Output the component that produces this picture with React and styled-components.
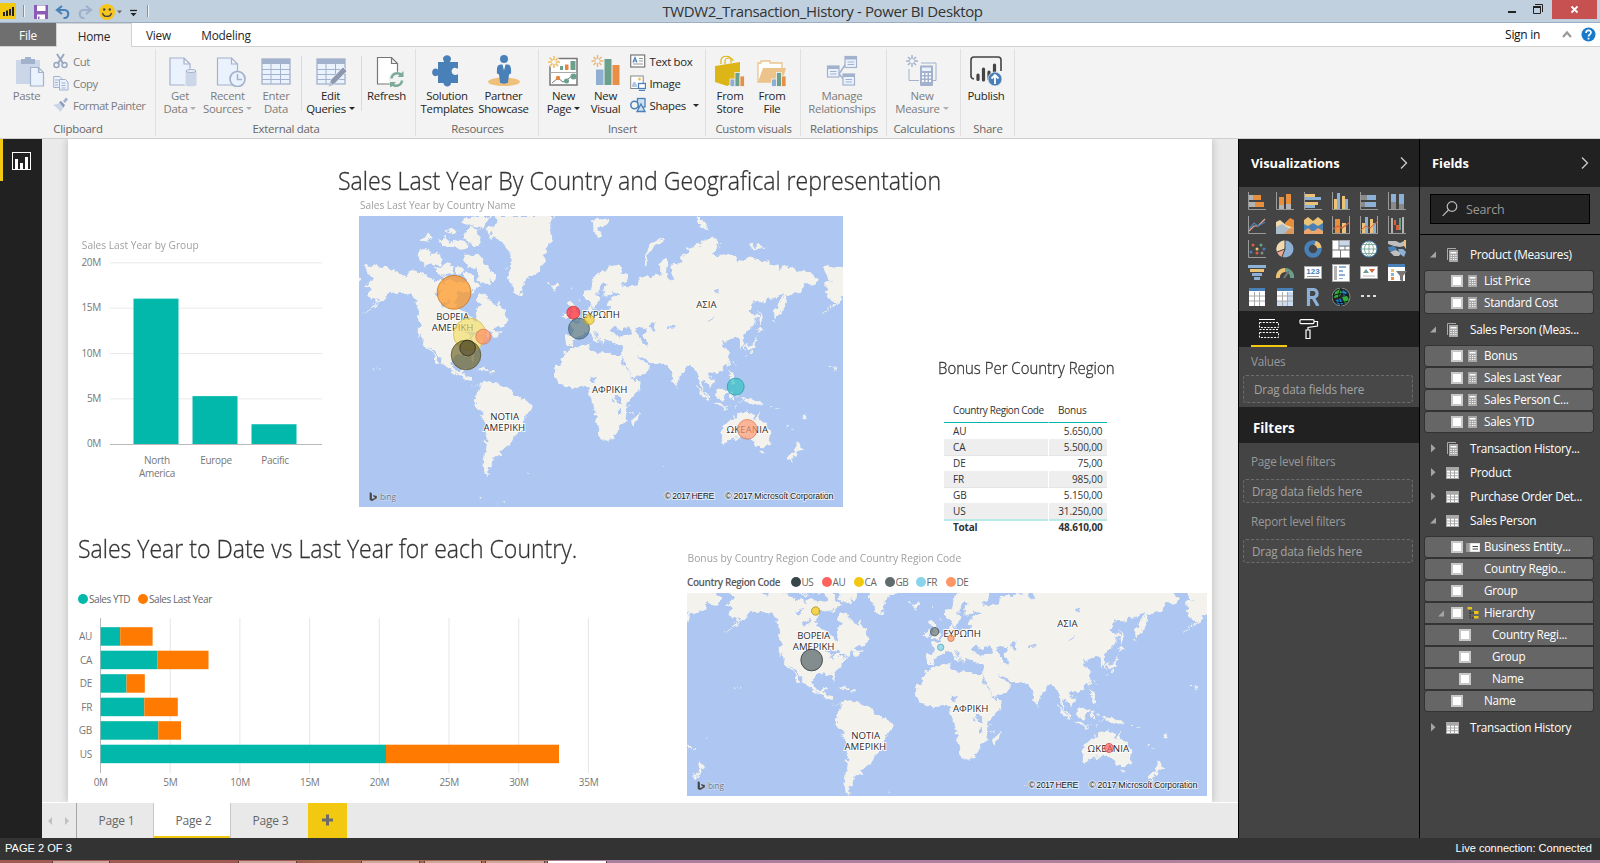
import React from "react";
import styled, { createGlobalStyle, css } from "styled-components";

const Global = createGlobalStyle`
  * { box-sizing: border-box; }
  body { margin: 0; overflow: hidden; font-family: "Open Sans", "Noto Sans", sans-serif; font-size: 12px; color: #333; }
`;

/* ---------- shell ---------- */
const Window = styled.div`width: 1600px; height: 863px; display: flex; flex-direction: column; background: #eaeaea;`;
const TitleBar = styled.header`height: 23px; flex: none; display: flex; align-items: stretch; background: #c0d0df; border-bottom: 1px solid #9cafc2;`;
const QuickAccess = styled.div`width: 160px; flex: none; svg { display: block; }`;
const WindowTitle = styled.div`flex: 1; text-align: center; padding-right: 18px; font-size: 15px; line-height: 23px; letter-spacing: -0.38px; color: #333;`;
const WindowButtons = styled.div`width: 97px; flex: none; display: flex; svg { display: block; }`;
const TabRow = styled.nav`height: 24px; flex: none; display: flex; background: #fff; border-bottom: 1px solid #d2d2d2;`;
const Tab = styled.div`
  width: ${(p) => p.$w}px; height: 24px; line-height: 25px; text-align: center; font-size: 11.8px; letter-spacing: -0.2px; color: #262626;
  ${(p) => p.$kind === "file" && css`background: #6f6f6f; color: #fff; height: 23px; line-height: 24px;`}
  ${(p) => p.$kind === "active" && css`background: #f3f3f3; border: 1px solid #d2d2d2; border-bottom: 0;`}
`;
const TabTail = styled.div`margin-left: auto; display: flex; align-items: center; gap: 20px; padding-right: 4px; font-size: 12px; letter-spacing: -0.3px; color: #111; svg { display: block; }`;

/* ---------- ribbon ---------- */
const Ribbon = styled.div`height: 92px; flex: none; display: flex; background: #f3f3f3; border-bottom: 1px solid #cfcfcf;`;
const Group = styled.section`
  width: ${(p) => p.$w}px; flex: none; display: flex; flex-direction: column; justify-content: space-between; height: 91px;
  background: linear-gradient(#e0e0e0, #e0e0e0) right 2px / 1px 87px no-repeat; background-position: right 0 top 2px;
`;
const GroupBody = styled.div`display: flex; padding: 8px 0 0 ${(p) => p.$pad || 0}px;`;
const GroupName = styled.div`text-align: center; font-size: 11.4px; letter-spacing: -0.25px; line-height: 14px; padding-bottom: 2px; color: #666;`;
const BigButton = styled.div`
  width: ${(p) => p.$w}px; flex: none; display: flex; flex-direction: column; align-items: center;
  font-size: 11.4px; line-height: 13px; letter-spacing: -0.28px; color: ${(p) => (p.$off ? "#7c7c7c" : "#262626")};
  white-space: nowrap; text-align: center;
  svg { display: block; width: 34px; height: 32px; margin-bottom: 2px; transform: translateX(${(p) => p.$dx || 0}px); }
`;
const Caret = styled.i`display: inline-block; margin-left: 3px; vertical-align: 3px; border: 3px solid transparent; border-top: 3.5px solid ${(p) => (p.$off ? "#b0b0b0" : "#262626")}; border-bottom: 0;`;
const ShortRule = styled.div`width: 1px; height: 55px; margin: 1px 0 0 ${(p) => p.$gap || 0}px; flex: none; background: #dadada;`;
const SmallStack = styled.div`display: flex; flex-direction: column; gap: 6px; padding-left: ${(p) => p.$pad || 0}px; margin-top: -2px;`;
const SmallButton = styled.div`
  display: flex; align-items: center; gap: 4px; height: 16px; font-size: 11.4px; letter-spacing: ${(p) => (p.$off ? -0.5 : -0.33)}px; white-space: nowrap; color: ${(p) => (p.$off ? "#7c7c7c" : "#262626")};
  svg { display: block; width: 16px; height: 16px; }
`;

/* ---------- workspace ---------- */
const Workspace = styled.div`height: 699px; flex: none; display: flex;`;
const Rail = styled.aside`width: 42px; flex: none; background: #212121;`;
const RailItem = styled.div`height: 42px; border-left: 3px solid #f2c811; padding: 13px 0 0 9px; svg { display: block; }`;
const Center = styled.main`width: 1196px; flex: none; display: flex; flex-direction: column;`;
const Stage = styled.div`height: 664px; padding: 0 26px; background: #eaeaea; border-bottom: 1px solid #fff; overflow: hidden;`;
const Report = styled.div`width: 1144px; height: 663px; background: #fff; box-shadow: 0 0 8px rgba(0,0,0,.22); padding-top: 26px;`;
const Row = styled.div`display: flex; align-items: flex-start; height: ${(p) => p.$h}px;`;
const Visual = styled.div`width: ${(p) => p.$w}px; flex: none; padding: ${(p) => p.$top}px 0 0 ${(p) => p.$left || 0}px; svg { display: block; }`;
const Heading = styled.h1`
  margin: 0 0 0 ${(p) => p.$left || 0}px; font-weight: 300; color: #333; white-space: nowrap; -webkit-text-stroke: .3px #333;
  font-size: ${(p) => p.$size}px; line-height: ${(p) => (p.$size > 20 ? 30 : 20)}px; transform: scaleX(${(p) => p.$narrow}); transform-origin: 0 50%;
`;
const VisualTitle = styled.div`font-size: 11px; line-height: 14px; color: #a0a0a0; white-space: nowrap; padding-left: ${(p) => p.$left || 0}px; transform: scaleX(${(p) => p.$narrow}); transform-origin: 0 50%;`;
const MapSlot = styled.div`padding-top: 4px;`;
const Legend = styled.div`display: flex; align-items: center; height: 14px; margin: ${(p) => p.$top}px 0 0 ${(p) => p.$left || 0}px; font-size: 10px; letter-spacing: -0.42px; color: #666; white-space: nowrap;`;
const LegendName = styled.span`font-weight: 600; width: 103.5px; letter-spacing: -0.43px; color: #5a5a5a;`;
const LegendItem = styled.span`
  display: flex; align-items: center; gap: 1px; width: ${(p) => p.$w}px;
  &::before { content: ""; width: 10px; height: 10px; border-radius: 50%; background: ${(p) => p.$c}; }
`;
const Table = styled.div`width: 163px; margin: 22px 0 0 5.5px; font-size: 10px; color: #333; white-space: nowrap;`;
const TableRow = styled.div`
  display: grid; grid-template-columns: 104px 1fr; line-height: 16px; height: 16px;
  span { padding: 0 4px 0 9.5px; background: ${(p) => (p.$stripe ? "#eee" : "transparent")}; border-bottom: 1px solid ${(p) => (p.$stripe ? "#e4e4e4" : "transparent")}; letter-spacing: -0.1px; }
  span + span { text-align: right; border-left: 1px solid #fff; }
  ${(p) => p.$head && css`height: 23px; line-height: 20px; span { letter-spacing: -0.4px; padding-right: 0; border-bottom: 1px solid #01b8aa; } span + span { text-align: left; letter-spacing: -0.2px; }`}
  ${(p) => p.$last && css`span { border-bottom: 2px solid #b8ebe6; }`}
  ${(p) => p.$total && css`font-weight: 700; span { letter-spacing: -0.2px; }`}
`;
const PageBar = styled.div`height: 35px; display: flex; background: #e9e9e9; color: #666;`;
const Pager = styled.div`width: 35px; border-right: 1px solid #a5a5a5; svg { display: block; }`;
const PageTab = styled.div`
  width: 77px; text-align: center; padding-left: 3px; line-height: 36px; font-size: 12px; letter-spacing: -0.2px; border-right: 1px solid ${(p) => (p.$last ? "transparent" : "#c8c8c8")};
  ${(p) => p.$on && css`background: #fff; box-shadow: inset 0 -2px #f2c811;`}
`;
const AddPage = styled.div`width: 39px; background: #f2c811; svg { display: block; }`;

/* ---------- side panes ---------- */
const Pane = styled.aside`width: 181px; flex: none; background: #444; border-left: 1px solid #000; display: flex; flex-direction: column;`;
const PaneHead = styled.div`height: 48px; flex: none; display: flex; justify-content: space-between; align-items: center; background: #212121; color: #fff; font-weight: 700; font-size: 12.9px; letter-spacing: -0.05px; padding: 0 11px 0 12px; svg { display: block; }`;
const SubHead = styled(PaneHead)`height: 36px; padding: 5px 0 0 14px; font-size: 13.4px;`;
const Gallery = styled.div`height: 124px; padding: 2px 0 0 4px; display: grid; grid-template-columns: repeat(6, 28px); grid-auto-rows: 24px; place-items: center; svg { display: block; }`;
const ModeTabs = styled.div`height: 36px; background: #212121; display: flex; gap: 4px; padding-left: 12px; svg { display: block; }`;
const ModeTab = styled.div`width: 36px; display: flex; justify-content: center; padding-top: 8px; border-bottom: ${(p) => (p.$on ? "2px solid #f2c811" : 0)};`;
const WellLabel = styled.div`font-size: 11.7px; letter-spacing: -0.22px; color: #999; line-height: 16px; height: ${(p) => p.$top + 16}px; padding: ${(p) => p.$top - 1}px 0 0 12px;`;
const Well = styled.div`margin: ${(p) => p.$m}; height: ${(p) => p.$h}px; line-height: ${(p) => p.$h - 1}px; border: 1px dashed #6c6c6c; border-radius: 3px; background: #484848; color: #a3a3a3; font-size: 11.7px; letter-spacing: -0.17px; padding-left: ${(p) => p.$pad}px;`;
const SearchArea = styled.div`height: 48px; padding: 7px 10px; border-bottom: 1px solid #000;`;
const SearchBox = styled.div`height: 30px; border: 1px solid #000; background: #222; display: flex; align-items: center; gap: 8px; padding-left: 11px; color: #999; font-size: 12.5px; letter-spacing: -0.2px; svg { display: block; }`;
const FieldTree = styled.div`padding-top: 8px;`;
const TableHead = styled.div`height: 24px; display: flex; align-items: center; color: #fff; font-size: 11.8px; letter-spacing: -0.3px; white-space: nowrap; padding: 0 0 1px 9px; svg { display: block; }`;
const GlyphPad = styled.span`width: 33px; display: flex; padding-left: 9px; flex: none;`;
const FieldList = styled.div`margin: 3px 6px 4px 4px;`;
const Field = styled.div`
  height: 22px; display: flex; align-items: center; background: #666; border: 1px solid #333; border-radius: ${(p) => (p.$joined ? 0 : 3)}px; background-clip: padding-box;
  color: #fff; font-size: 11.7px; letter-spacing: -0.25px; white-space: nowrap; padding: 0 0 0 ${(p) => (p.$deep ? 34 : 10)}px;
  svg { display: block; }
`;
const FieldName = styled.span`line-height: 16px; padding-bottom: 2px;`;
const Box = styled.span`width: 12px; height: 12px; background: #fff; border: 2px solid #c8c8c8; flex: none;`;
const ArrowSlot = styled.span`width: 16px; flex: none; padding-left: 2px;`;
const GlyphSlot = styled.span`width: 21px; display: flex; justify-content: center; padding-right: 2px; flex: none;`;
const StatusBar = styled.footer`height: 22px; flex: none; background: #333; color: #fff; display: flex; justify-content: space-between; padding: 0 8px 0 5px; line-height: 20px; font-family: "Liberation Sans", sans-serif; font-size: 11.1px; letter-spacing: -0.02px;`;
const TaskStrip = styled.div`height: 3px; flex: none; display: flex; background: linear-gradient(90deg, #9f5a52 0, #9f5a52 290px, #a56a50 320px, #a56a50 535px, #a97f9e 560px, #b2829f 100%);`;
const TaskButton = styled.i`width: ${(p) => p.$w}px; margin-left: ${(p) => p.$m}px; margin-top: 1px; background: ${(p) => (p.$on ? "#fff" : "#cfa69d")}; border-left: 1px solid #5c3c38; border-right: 1px solid #5c3c38;`;

/* ---------- world map ---------- */
const LAND = [
  // North America
  "48,352 62,347 90,350 122,352 140,365 165,377 185,366 205,362 215,372 240,383 262,393 280,398 300,392 322,400 345,392 345,372 352,362 366,378 372,392 392,402 384,412 368,425 352,420 338,425 322,430 314,443 316,468 328,478 345,490 360,500 370,518 382,518 384,500 378,480 390,465 384,448 386,432 410,440 422,458 440,474 450,455 460,482 475,515 468,526 440,528 428,545 448,548 462,540 455,552 432,560 420,548 404,562 398,572 392,590 384,604 368,614 372,638 364,630 358,616 340,613 322,617 308,628 304,645 312,664 326,667 336,652 346,652 336,672 360,678 360,694 372,704 392,704 404,700 398,710 375,704 350,690 328,680 300,664 285,652 275,632 255,605 244,590 240,588 250,608 264,630 270,645 258,634 244,610 236,598 214,570 206,545 208,505 206,475 192,450 178,440 165,430 130,428 112,438 95,452 74,470 52,486 34,496 62,476 88,452 64,448 50,430 64,416 48,402 70,390 56,374",
  // Arctic archipelago
  "205,306 225,300 245,312 262,308 276,325 268,345 245,340 230,350 212,335",
  "258,355 290,340 310,350 306,372 280,380 262,372",
  "335,316 352,320 368,312 392,320 402,345 418,362 438,378 432,392 418,388 426,410 404,402 388,388 392,370 372,352 350,350 342,335",
  "262,270 285,262 300,272 318,266 345,278 356,290 330,296 300,290 276,292",
  "285,240 305,232 325,240 320,256 295,256",
  "340,245 360,230 385,240 380,262 398,280 372,292 352,280",
  "330,215 350,205 380,198 426,198 412,216 396,236 376,232 352,224",
  "215,268 238,248 248,262 228,282",
  "318,352 336,352 340,372 322,374",
  "345,410 362,412 368,422 350,424",
  // Greenland
  "408,236 430,232 438,212 432,198 608,198 600,230 604,270 596,292 580,310 590,325 575,345 560,360 546,378 526,386 518,410 510,438 496,430 487,402 478,370 482,332 472,300 458,278 440,266 415,266 426,250",
  // Iceland
  "595,400 606,406 620,397 626,408 610,419 597,413",
  // South America
  "400,700 415,692 430,700 445,697 460,708 480,716 490,735 510,748 535,755 546,768 540,785 525,805 520,832 510,850 492,860 480,882 466,896 446,905 452,914 430,926 428,946 415,960 416,984 404,970 400,940 405,900 410,860 411,822 400,802 380,775 371,752 380,732 386,712",
  // Africa
  "648,597 690,588 715,585 718,600 745,612 765,605 790,612 812,612 818,640 835,665 848,692 872,694 870,712 850,736 830,760 828,790 832,812 806,830 800,850 785,870 755,875 745,850 738,825 735,800 740,785 725,770 725,745 715,735 718,715 700,706 670,715 650,715 630,700 615,680 620,650 635,625",
  "870,784 862,812 852,834 845,820 850,800",
  // Europe and Asia
  "648,585 645,556 652,552 674,553 672,540 660,526 678,520 690,510 702,500 714,492 716,472 724,464 728,482 752,482 772,474 776,456 792,450 784,441 806,436 800,428 778,434 764,440 760,424 774,402 766,394 752,410 742,430 745,448 738,464 730,474 722,462 712,450 702,450 702,430 718,412 728,398 736,375 752,362 778,350 802,345 815,365 834,380 830,395 808,396 822,408 836,412 862,402 868,385 888,378 905,384 915,372 932,378 930,350 940,325 950,322 955,345 948,370 960,395 970,380 960,350 968,332 985,335 1000,340 990,320 1010,305 1030,290 1060,275 1085,258 1110,280 1105,295 1085,310 1100,318 1140,315 1160,325 1165,340 1180,330 1200,325 1250,335 1285,350 1290,360 1315,350 1350,360 1380,368 1400,388 1395,404 1365,402 1352,428 1330,432 1310,438 1302,465 1290,492 1278,505 1275,482 1290,455 1306,430 1280,438 1250,455 1215,452 1194,482 1222,492 1215,520 1192,545 1178,562 1186,588 1175,597 1165,572 1150,560 1132,572 1118,568 1128,590 1140,612 1135,642 1118,660 1095,668 1075,672 1092,696 1080,708 1065,690 1054,692 1066,720 1085,746 1078,748 1056,712 1045,680 1035,658 1024,645 1005,665 986,690 978,706 968,690 960,665 955,648 935,636 905,640 880,625 860,618 876,640 896,638 906,650 890,670 860,684 846,686 830,650 810,612 818,590 815,580 792,586 780,574 766,568 760,582 748,570 738,552 722,536 738,560 750,570 735,574 718,552 702,546 690,562 675,570 665,585",
  // British Isles
  "662,458 674,462 680,486 692,502 678,508 662,508 668,490 656,480",
  "646,484 656,484 656,500 644,500",
  // Arctic Russia and Svalbard
  "882,345 886,312 906,280 936,263 942,268 910,292 895,316 892,346",
  "722,212 745,206 778,202 765,224 748,236 756,256 742,262 728,236",
  "1036,198 1060,206 1078,235 1062,238 1040,214",
  "1200,284 1226,288 1250,293 1222,296 1202,292",
  // East Asia islands
  "1226,484 1238,500 1232,530 1226,520",
  "1222,538 1244,542 1222,556", "1222,556 1216,588 1186,602 1184,594 1210,578",
  "1142,632 1138,650 1132,640", "1138,655 1146,675 1162,704 1150,708 1140,682",
  "1040,706 1060,726 1084,755 1070,753 1050,730", "1084,760 1114,762 1144,770 1112,770",
  "1094,736 1122,712 1130,722 1120,748 1104,746", "1136,728 1152,728 1142,736 1148,754 1138,750",
  "1172,742 1205,744 1242,764 1216,768 1192,760",
  "976,696 984,706 978,714",
  // Oceania
  "1114,826 1150,806 1165,790 1192,780 1206,794 1216,810 1224,780 1232,800 1250,826 1264,850 1258,876 1246,892 1216,890 1210,872 1195,866 1170,862 1142,872 1120,877 1114,850",
  "1231,908 1244,908 1237,921",
  "1344,880 1356,896 1340,906 1324,936 1316,931 1334,906",
  // Caribbean
  "380,652 398,655 418,664 396,662", "420,664 438,664 432,670 418,670",
];
const WATER = [
  "782,546 796,530 812,536 830,530 850,548 826,556 794,556",
  "864,530 888,538 880,556 896,578 888,592 872,580 866,556 856,544",
  "904,526 914,522 912,542 902,540", "1072,510 1086,504 1096,484 1088,508 1074,516",
  "798,738 814,738 812,756 800,756", "806,772 812,772 814,796 808,794", "786,762 790,748 794,762",
  "350,540 372,540 386,552 372,552 366,572 358,568 360,552 342,548", "388,560 402,552 404,560 388,568",
  "250,428 268,420 278,426 256,436", "275,460 300,452 296,462 272,470", "1092,420 1108,416 1110,426 1094,428", "946,532 968,524 980,528 950,538",
  "724,680 740,680 738,692 726,690",
];
const DOTS = [[470,357],[480,385],[660,412],[686,452],[1160,734],[1172,752],[1258,770],[1285,774],[1360,802],[1152,640],[85,655],[70,650],[1456,655],[940,950],[838,768],[846,784],[1130,776],[1160,774],[392,1040],[440,1066],[458,1050],[1192,618],[1206,606],[1270,512],[1310,830],[1322,836],[536,968]];
const LABELS = [["ΒΟΡΕΙΑ",308,500,98],["ΑΜΕΡΙΚΗ",308,533,125],["ΕΥΡΩΠΗ",753,495,113],["ΑΣΙΑ",1069,464,61],["ΑΦΡΙΚΗ",779,720,106],["ΝΟΤΙΑ",464,801,87],["ΑΜΕΡΙΚΗ",463,832,125],["ΩΚΕΑΝΙΑ",1192,838,125]];
const WORLD = 1373;

const MapText = styled.text`
  font-family: "Open Sans", sans-serif; font-size: 29px; fill: #2d2d2d; text-anchor: middle; paint-order: stroke; stroke: #fff; stroke-opacity: .85; stroke-width: 6px;
`;
const MapCredit = styled.text`font-family: "Liberation Sans", sans-serif; font-size: 9px; fill: #222; paint-order: stroke; stroke: #fff; stroke-opacity: .6; stroke-width: 2px;`;

function Land({ shift }) {
  return (
    <g transform={`translate(${shift} 0)`}>
      {LAND.map((p) => <polygon key={p} points={p} fill="#f3f2ed" />)}
      {WATER.map((p) => <polygon key={p} points={p} fill="#adc7f2" />)}
      {DOTS.map(([x, y]) => <rect key={x + "-" + y} x={x - 3} y={y - 2} width="6" height="5" fill="#eef1f0" />)}
    </g>
  );
}

function WorldMap({ id, width, height, dx, dy, bubbles }) {
  return (
    <svg width={width} height={height} viewBox={`0 0 ${width} ${height}`}>
      <defs>
        <filter id={id} filterUnits="userSpaceOnUse" x="-140" y="150" width="1720" height="960">
          <feTurbulence type="fractalNoise" baseFrequency="0.045" numOctaves="3" seed="4" result="n" />
          <feDisplacementMap in="SourceGraphic" in2="n" scale="28" xChannelSelector="R" yChannelSelector="G" />
        </filter>
      </defs>
      <rect width={width} height={height} fill="#adc7f2" />
      <g transform={`translate(${dx} ${dy}) scale(.33333) translate(-27 -198)`}>
        <g filter={`url(#${id})`}>
          <Land shift={-WORLD} /><Land shift={0} /><Land shift={WORLD} />
        </g>
        {LABELS.map(([t, x, y, w]) => <MapText key={t + y} x={x} y={y + 10} textLength={w}>{t}</MapText>)}
        {bubbles.map(([x, y, r, c, s, o]) => (
          <circle key={x} cx={x} cy={y} r={r - 1.5} fill={c} fillOpacity={o || 0.75} stroke={s} strokeWidth="3" strokeOpacity=".8" />
        ))}
      </g>
      <g transform={`translate(10 ${height - 15})`}>
        <path d="M.5 0 3 1v6l3-1.5-1.600-.8-.8-2L8 4v2.200L3 9.300.5 8z" fill="#444" stroke="#fff" strokeOpacity=".4" strokeWidth=".5" />
        <text x="11" y="8" fontSize="8.500" fill="#6d7480" stroke="#fff" strokeOpacity=".5" strokeWidth="1" paintOrder="stroke" fontFamily="Open Sans, sans-serif" textLength="16">bing</text>
      </g>
      <MapCredit x={width - 178.500} y={height - 8} textLength="50">© 2017 HERE</MapCredit>
      <MapCredit x={width - 118} y={height - 8} textLength="108.500">© 2017 Microsoft Corporation</MapCredit>
    </svg>
  );
}

const SALES_BUBBLES = [
  [359, 553, 50, "#f5dd62", "#d3bd50", 0.65], [312, 427, 52, "#ff9a27", "#c8741f", 0.75], [400, 560, 24, "#fd8f62", "#d97f5a", 0.7],
  [348, 615, 46, "#6b5f1c", "#5c5430", 0.65], [353, 594, 25, "#3f3b26", "#2f2c1c", 0.5], [670, 488, 21, "#ff2f35", "#c93338", 0.75],
  [687, 536, 33, "#4c6b78", "#3f5f6e", 0.65], [718, 509, 16, "#f2c811", "#bfa022", 0.65], [1157, 710, 27, "#2bc0c0", "#25a0a3", 0.65], [1192, 838, 31, "#fd9a72", "#d9805d", 0.7],
];
const BONUS_BUBBLES = [
  [314, 426, 14, "#f2c811", "#a8912a", 0.75], [302, 573, 34, "#5f6b6d", "#2f3a3c", 0.75], [671, 488, 14, "#5f6b6d", "#3c4b55", 0.65],
  [720, 508, 11, "#fe9666", "#cc7850", 0.75], [689, 535, 11, "#8ad4eb", "#4fa9be", 0.8], [1194, 837, 15, "#fd625e", "#d04a48", 0.7],
];

/* ---------- charts ---------- */
const AxisText = styled.text`font-family: "Open Sans", sans-serif; font-size: 10px; letter-spacing: -0.3px; fill: #777; text-anchor: ${(p) => p.$a || "end"};`;

function GroupChart() {
  const y0 = 191.700, unit = 9.070;
  const groups = [["North", 133.500, 16.05, "America"], ["Europe", 192.500, 5.3], ["Pacific", 251.500, 2.2]];
  return (
    <svg width="291" height="240" viewBox="68 0 291 240">
      {[5, 10, 15, 20].map((v) => <rect key={v} x="110" y={y0 - v * unit} width="212" height="1" fill="#e8e8e8" />)}
      {[0, 5, 10, 15, 20].map((v) => <AxisText key={v} x="101" y={y0 - v * unit + 3.500}>{v}M</AxisText>)}
      {groups.map(([n, x, v, n2]) => (
        <g key={n}>
          <rect x={x} y={y0 - v * unit + 0.5} width="45" height={v * unit} fill="#01b8aa" />
          <AxisText $a="middle" x={x + 23.500} y="212">{n}</AxisText>
          {n2 && <AxisText $a="middle" x={x + 23.500} y="225">{n2}</AxisText>}
        </g>
      ))}
      <rect x="110" y={y0 + 0.3} width="212" height="1" fill="#b8b8b8" />
    </svg>
  );
}

function YearChart() {
  const x0 = 100.700, unit = 13.940;
  const rows = [["AU", 120.2, 152.600], ["CA", 157.600, 208.500], ["DE", 126.500, 144.800], ["FR", 144.300, 177.800], ["GB", 158.300, 181], ["US", 386, 559]];
  return (
    <svg width="560" height="190" viewBox="68 606 560 190">
      {[0, 5, 10, 15, 20, 25, 30, 35].map((v) => (
        <g key={v}>
          <rect x={x0 + v * unit - 0.7} y="618" width="1" height="155" fill={v ? "#e6e6e6" : "#b8b8b8"} />
          <AxisText $a="middle" x={x0 + v * unit} y="786.200">{v}M</AxisText>
        </g>
      ))}
      {rows.map(([n, a, b], i) => (
        <g key={n}>
          <AxisText x="92" y={640 + i * 23.500}>{n}</AxisText>
          <rect x={x0} y={627.200 + i * 23.500} width={a - x0} height="18.500" fill="#01b8aa" />
          <rect x={a} y={627.200 + i * 23.500} width={b - a} height="18.500" fill="#ff7a00" />
        </g>
      ))}
    </svg>
  );
}

/* ---------- ribbon icons ---------- */
const PALE = "#eaf2fd", LINE = "#a3b2cc", MID = "#cbd6e8", BLUE = "#4a80b8";
const Svg = ({ children, vb = "0 0 34 32" }) => <svg viewBox={vb} fill="none">{children}</svg>;
const Sheet = () => <path d="M3.500 3h14l6 6v21h-20z M17.500 3v6h6" fill={PALE} stroke={LINE} strokeWidth="1.200" />;
const Spark = ({ c, x = 0, y = 0 }) => (
  <path transform={`translate(${x} ${y})`} d="M6 0v4M6 8v4M0 6h4M8 6h4M2 2l2.600 2.600M7.500 7.500 10 10M10 2 7.500 4.500M4.500 7.500 2 10" stroke={c} strokeWidth="1.500" />
);
const Grid = () => (
  <>
    <rect x="3" y="4" width="28" height="25" fill={PALE} stroke={LINE} strokeWidth="1.300" />
    <rect x="3" y="4" width="28" height="5" fill={LINE} />
    <path d="M3 14.500h28M3 19.500h28M3 24.500h28M12 9v20M21.500 9v20" stroke={LINE} />
  </>
);
const MiniBars = ({ x }) => (
  <g stroke="#f3f3f3" strokeWidth=".8">
    <rect x={x} y="24" width="5" height="7.500" fill="#8eafd2" /><rect x={x + 5} y="17.500" width="5" height="14" fill="#6ba08c" /><rect x={x + 10} y="21" width="4.500" height="10.500" fill="#e88f47" />
  </g>
);
const I = {
  paste: <Svg><path d="M5 5h24v24H5z" fill={MID} /><path d="M10 9V4h4V2h6v2h4v5z" fill={LINE} /><path d="M19.500 12.500h8l5 5V31h-13z M27.500 12.500v5h5" fill={PALE} stroke={LINE} strokeWidth="1.200" /></Svg>,
  getData: <Svg><Sheet /><path d="M18.500 16c0-2.500 12-2.500 12 0v14c0 2.500-12 2.500-12 0z" fill={MID} stroke="#f3f3f3" /><ellipse cx="24.500" cy="16" rx="5" ry="1.500" fill={PALE} stroke={LINE} /></Svg>,
  recent: <Svg><Sheet /><circle cx="23.500" cy="24" r="7.500" fill={PALE} stroke={LINE} strokeWidth="1.700" /><path d="M23.500 19v5.500h4.500" stroke={LINE} strokeWidth="1.500" /></Svg>,
  enter: <Svg><Grid /></Svg>,
  edit: <Svg><Grid /><path d="m15 31 1.500-6L29 12l4 4-12.500 13z" fill="#8b98b0" stroke="#f3f3f3" strokeWidth=".8" /><path d="m14.500 31.500 1.500-5 3.500 3.500z" fill="#b9c3d4" /></Svg>,
  refresh: <Svg><path d="M6.500 2.500h14l6 6V29h-20z M20.500 2.500v6h6" fill="#fff" stroke="#777" strokeWidth="1.200" /><circle cx="25.500" cy="24.500" r="8" fill="#f3f3f3" /><path d="M20.500 23.500c.5-5.500 7.500-7 10.500-3M31 25.500c-.5 5.500-7.500 7-10.500 3" stroke="#7cab98" strokeWidth="2.600" /><path d="M32.500 16v6h-6zM19 33v-6h6z" fill="#7cab98" /></Svg>,
  puzzle: <Svg><path d="M8 7h6c0-1-1-2-1-3 0-5 8-5 8 0 0 1-1 2-1 3h8v6.500c-1 0-2-.8-3-.8-4.500 0-4.500 7.300 0 7.300 1 0 2-.8 3-.8V28h-7c0 4.500-7.500 4.500-7.500 0H8v-7.500c-1 0-1.500.7-2.500.7-4.500 0-4.500-7.700 0-7.700 1 0 1.500.8 2.500.8z" fill={BLUE} /></Svg>,
  partner: <Svg><ellipse cx="17" cy="26.800" rx="16" ry="4.300" fill="#efc07c" /><circle cx="17" cy="4" r="4" fill={BLUE} /><path d="M13.500 9.500h2l1.500 6 1.500-6h2c3 0 4 3 3.500 9l-2 1-1 8c-1 1.500-7 1.500-8 0l-1-8-2-1c-.5-6 .5-9 3.500-9z" fill={BLUE} /></Svg>,
  newPage: <Svg><rect x="4" y="3.500" width="27" height="26.500" fill="#fff" stroke="#777" strokeWidth="1.500" /><path d="M4 17.500h27" stroke="#aaa" /><path d="M14 11h3v4h-3zM24.500 6h5v9h-5z" fill="#6ba08c" /><path d="M19 9.500h3.500V15H19z" fill="#e8853c" /><path d="m6 28 6-5 5 4 5-3 5-4" stroke="#777" /><circle cx="12" cy="23" r="2.200" fill="#e8853c" /><circle cx="20.500" cy="26" r="2.500" fill="#6ba08c" /><circle cx="27.500" cy="21.500" r="3" fill="#6ba08c" /><circle cx="8" cy="7" r="6" fill="#f7f4ee" /><Spark c="#eebf6a" x={2} y={1} /></Svg>,
  newVisual: <Svg><path d="M8.500 14.500h7.500V30H8.500z" fill="#8eafd2" /><path d="M17 4h7v26h-7z" fill="#6ba08c" /><path d="M25 10h7v20h-7z" fill="#e88f47" /><Spark c="#e9b87c" x={4} y={0} /></Svg>,
  store: <Svg><path d="M2 11l25-4v18L14 31 2 27z" fill="#deb517" /><path d="M8 9V5c0-5 10-5 10 0v3M12 9V6c0-4 8-4 8 0" stroke="#deb517" strokeWidth="1.200" /><MiniBars x={17} /></Svg>,
  file: <Svg><path d="M3 27V8h3V6h9v2h12v19z" fill="#fff" stroke="#ecc38a" strokeWidth="1.300" /><path d="M3 27l5-14h23l-4 14z" fill="#ecc38a" /><MiniBars x={16.500} /></Svg>,
  manage: <Svg><path d="M14 19l8-12M14 19l7 8" stroke={LINE} strokeWidth="1.500" />{[[20, 1.500], [2.500, 11], [18, 19]].map(([x, y]) => <g key={y}><rect x={x} y={y} width="11.500" height="11" fill={PALE} stroke={LINE} strokeWidth="1.200" /><path d={`M${x} ${y + 1.500}h11.500`} stroke={LINE} strokeWidth="3" /><path d={`M${x + 2.500} ${y + 5.500}h6.500M${x + 2.500} ${y + 8}h6.500`} stroke={LINE} /></g>)}</Svg>,
  measure: <Svg><path d="M4 14v11.500h10M16 8h15v17.500h-3" stroke={LINE} /><rect x="15" y="10.500" width="13" height="20.500" rx="1" fill={LINE} /><path d="M17 12.500h9v3.500h-9z" fill={PALE} />{[19, 22.500, 26].map((y) => <path key={y} d={`M17 ${y}h2M20.500 ${y}h2M24 ${y}h2`} stroke="#fff" strokeWidth="2" />)}<Spark c={LINE} x={1} y={0} /></Svg>,
  publish: <Svg><path d="M5 24c-2-.3-3-1-3-3V5c0-2 1-3 3-3h24c2 0 3 1 3 3v11" stroke="#444" strokeWidth="1.600" /><path d="M9 20v4.500M14.500 14v11M20 17v7M25.500 10v7" stroke="#444" strokeWidth="3.200" strokeLinecap="round" /><circle cx="26" cy="24" r="7" fill={BLUE} stroke="#f3f3f3" strokeWidth=".7" /><path d="M26 29v-8M22.500 23.500 26 20l3.500 3.500" stroke="#fff" strokeWidth="1.800" /></Svg>,
  cut: <Svg vb="0 0 16 16"><path d="M4 1l6.500 10M11 1 4.500 11" stroke="#98a8c0" strokeWidth="2" /><circle cx="3.500" cy="12" r="2.500" stroke="#98a8c0" strokeWidth="1.500" /><circle cx="11.500" cy="12" r="2.500" stroke="#98a8c0" strokeWidth="1.500" /></Svg>,
  copy: <Svg vb="0 0 16 16"><path d="M.7 1.500h6l2 2v9h-8z" fill={PALE} stroke={LINE} /><path d="M2 5h4M2 7.500h3M2 10h3" stroke={LINE} /><path d="M6.500 4.500h6l2.500 2.500v8H6.500z" fill={PALE} stroke={LINE} /><path d="M8.500 8h4M8.500 10.500h4M8.500 13h4" stroke={LINE} /></Svg>,
  painter: <Svg vb="0 0 16 16"><path d="M0 8l7-2 4 4-4 5c-1-3-4-5-7-7z" fill={MID} /><path d="M6 5l2-1 4 4-1.500 2.500z" fill="#8b9bb8" /><path d="m10 4 3-3.500 2 2L12 6z" fill={LINE} /></Svg>,
  textbox: <Svg vb="0 0 16 16"><rect x=".7" y="2" width="14" height="12" fill="#fff" stroke="#777" strokeWidth="1.200" /><path d="M3 9.500 5 4.500l2 5M3.500 8h3" stroke={BLUE} strokeWidth="1.200" /><path d="M9 5.500h4M9 8h4M3 11h10" stroke="#888" strokeWidth=".9" /></Svg>,
  image: <Svg vb="0 0 16 16"><rect x=".7" y="1" width="12.500" height="12.500" fill="#fff" stroke="#888" /><circle cx="9.500" cy="4" r="1.500" fill="#eebf6a" /><path d="M2 12c0-4 1.500-6 3-5s2 3 2 5z" fill="#b5c7e0" /><rect x="8.500" y="8.500" width="7" height="5" fill="#fff" stroke={BLUE} strokeWidth="1.300" /><path d="M9 15.500h6" stroke={BLUE} strokeWidth="1.300" /></Svg>,
  shapes: <Svg vb="0 0 16 16"><rect x="7.500" y="1.500" width="7.500" height="8.500" fill="#cfe0f3" stroke={BLUE} strokeWidth="1.300" /><circle cx="4.500" cy="8" r="3.700" stroke={BLUE} strokeWidth="1.500" fill="#f3f3f3" /><path d="M11 7l4 7.500H7z" fill="#cfe0f3" stroke={BLUE} strokeWidth="1.300" /></Svg>,
};

/* ---------- visualization gallery icons ---------- */
const O = "#e88f3d", Y = "#ecc274", B = "#8db0d6", G = "#b3b3b3", D = "#8a8a8a", DB = "#4a80b8", GR = "#6ba08c", R = "#d9603c";
const bars = (list) => list.map(([x, y, w, h, c], i) => <rect key={i} x={x} y={y} width={w} height={h} fill={c} />);
const Axes = () => <path d="M.5 0v17.500H18" stroke="#9a9a9a" fill="none" />;
const White = ({ h = 18, y = 0 }) => <rect x=".5" y={y + 0.5} width="17" height={h - 1} fill="#fff" stroke="#aaa" />;
const GALLERY = [
  <><Axes />{bars([[1, 3, 4, 5, G], [5, 3, 8, 5, O], [1, 10, 6, 5, G], [7, 10, 9, 5, O]])}</>,
  <><Axes />{bars([[3, 5, 5, 8, O], [3, 13, 5, 4, G], [10, 2, 5, 10, O], [10, 12, 5, 5, G]])}</>,
  <><Axes />{bars([[1, 2, 10, 3, Y], [1, 5, 16, 3, B], [1, 10, 13, 3, Y], [1, 13, 10, 3, B]])}</>,
  <><Axes />{bars([[2, 7, 3, 10, Y], [5, 1, 3, 16, B], [10, 4, 3, 13, Y], [13, 7, 3, 10, B]])}</>,
  <><Axes />{bars([[1, 3, 6, 5, D], [7, 3, 9, 5, B], [1, 10, 4, 5, D], [5, 10, 11, 5, B]])}</>,
  <><Axes />{bars([[3, 2, 5, 8, B], [3, 10, 5, 7, D], [11, 2, 5, 10, B], [11, 12, 5, 5, D]])}</>,
  <><Axes /><path d="M1 15l5-5 4 0 7-7" stroke="#f0a78e" fill="none" strokeWidth="1.200" /><path d="M1 13l5-6 4 3 7-4" stroke={DB} fill="none" strokeWidth="1.200" /></>,
  <><path d="M9 7l5-5 4 2v14H9z" fill={O} /><path d="M0 6l4-2 6 5 8 3v6H0z" fill="#f2d9ad" /><path d="M0 11l6-3 6 4 6 2v4H0z" fill={B} opacity=".7" /><path d="M8 18l6-6 4-1v7z" fill={O} opacity=".8" /></>,
  <><path d="M0 4l4-3 5 4 5-4 5 4v14H0z" fill={Y} /><path d="M0 8l4 2 5-3 5 3 5-3v8H0z" fill={DB} /><path d="M0 15l4-3 5 4 5-4 5 3v3H0z" fill="#eda56c" /></>,
  <><Axes />{bars([[3, 3, 5, 14, O], [10, 7, 4, 10, Y], [17, 0, 1, 17, O]])}<path d="M1 13l5-3 4 2 7-5" stroke={R} fill="none" strokeWidth="1.200" /></>,
  <><Axes />{bars([[2, 7, 3, 10, Y], [5, 1, 3, 16, B], [10, 3, 3, 14, Y], [13, 7, 3, 10, B], [17, 0, 1, 17, O]])}<path d="M1 14l5-4 4 2 7-6" stroke={R} fill="none" /></>,
  <><Axes />{bars([[3, 2, 2, 15, G], [6, 4, 2, 5, R], [8, 9, 3, 5, R], [11, 2, 2, 12, GR], [14, 1, 2, 16, G]])}</>,
  <><Axes />{[[5, 5, R], [13, 5, GR], [3, 12, DB], [9, 9, Y], [14, 13, D], [9, 13, R], [16, 9, DB]].map(([x, y, c]) => <circle key={x + "" + y} cx={x} cy={y} r="1.500" fill={c} />)}</>,
  <><circle cx="9" cy="9" r="8.500" fill={B} /><path d="M9 9V.5A8.500 8.500 0 0 0 1 12z" fill="#f2d9ad" /><path d="M9 9 1 12a8.500 8.500 0 0 0 5 5z" fill="#f0a78e" /><path d="M9 0v9L1 12M9 9l-3 8" stroke="#444" fill="none" /></>,
  <><circle cx="9" cy="9" r="6.500" fill="none" stroke={DB} strokeWidth="4.500" /><path d="M11 2.800A6.500 6.500 0 0 1 15.300 8" stroke={Y} strokeWidth="4.500" fill="none" /></>,
  <><White />{bars([[8, 1, 9, 6, "#c8d8ea"]])}<path d="M0 10h18M7 0v10M8.500 10v8M13 6v4M7 6h11" stroke="#777" /></>,
  <><circle cx="9" cy="9" r="8" fill="#fff" stroke={DB} /><path d="M1 9h16M9 1v16M3 4.500h12M3 13.500h12M9 1c-6 4-6 12 0 16M9 1c6 4 6 12 0 16" stroke={GR} fill="none" strokeWidth=".8" /></>,
  <><path d="M0 1h8l4 2 4-2v5l-4 1-6-1-6-2z" fill="#bfbfbf" /><path d="M0 7l6-1 3 3-3 3-5-1z" fill={DB} /><path d="M2 12l6-2 5 3-2 3-5 0z" fill="#bfbfbf" /><path d="M10 9l5 0 3 3-2 5-4-3z" fill={B} /><path d="M16 0h2v9l-2-3z" fill={Y} /></>,
  <>{bars([[0, 1, 18, 3, B], [2, 5, 14, 3, Y], [4, 9, 10, 3, B], [6, 13, 6, 3, B]])}</>,
  <><path d="M2 14a7 7 0 0 1 7-8" stroke={Y} strokeWidth="4" fill="none" /><path d="M9 6a7 7 0 0 1 7 8" stroke={GR} strokeWidth="4" fill="none" /><path d="M8 14l5-7" stroke="#777" strokeWidth="2" /></>,
  <><White h={13} y={2} /><text x="9" y="10" textAnchor="middle" fontSize="8" fontWeight="700" fill={DB} fontFamily="Liberation Sans, sans-serif">123</text><path d="M3 12.500h12" stroke="#999" /></>,
  <><White />{bars([[2, 2, 3, 14, G], [7, 2, 7, 2, B], [7, 6, 4, 2, B], [7, 10, 6, 2, B], [7, 14, 4, 1, B]])}</>,
  <><White h={13} y={2} /><path d="M3 9l3-4 3 4z" fill={GR} /><path d="M9 5h6l-3 4z" fill={R} /><path d="M3 12h12" stroke="#bbb" /></>,
  <><rect y="0" width="17" height="17" fill="#fff" /><rect width="17" height="3" fill={DB} />{bars([[3, 5, 3, 3, Y], [3, 9, 3, 3, B], [3, 13, 3, 3, O]])}<path d="M8 7h11l-4 5v6l-3-2v-4z" fill="#777" /></>,
  <><rect x="1" width="16" height="18" fill="#fff" /><rect x="1" width="16" height="3" fill={DB} /><path d="M1 8h16M1 13h16M6.500 4v14M11.500 4v14" stroke="#aaa" /></>,
  <><rect x="1" width="16" height="18" fill="#fff" /><rect x="1" width="16" height="3" fill={DB} /><path d="M12 4h5v14h-5zM1 13h16v5H1z" fill="#cbdcf0" /><path d="M1 8h16M1 13h16M6.500 4v14M11.500 4v14" stroke="#aaa" /></>,
  <path d="M4.500 18V1.500h4.500c5.500 0 5.500 8 0 8H4.500M9 9.500l5 8.500" fill="none" stroke={B} strokeWidth="3.200" />,
  <><circle cx="9" cy="9" r="9" fill="#20262a" stroke="#bbb" strokeWidth=".6" /><path d="M3 4l5-3 2 4-3 4-5 1zM10 9l5-1 2 4-4 4z" fill="#2fae3a" /><path d="M8 10l3 6-4 1-4-4zM11 2l4 3-3 3-2-3z" fill="#1d83d4" /><path d="M1 8c5-3 11-3 16 0M9 0c-3 6-3 12 0 18M2 13c5 2 9 2 14 0" stroke="#111" fill="none" /></>,
  <>{bars([[1, 7, 3, 2, "#ddd"], [7, 7, 3, 2, "#ddd"], [13, 7, 3, 2, "#ddd"]])}</>,
];

/* ---------- field pane glyphs ---------- */
const Chevron = () => <svg width="8" height="12" viewBox="0 0 8 12" fill="none" stroke="#ccc" strokeWidth="1.300"><path d="M1 .5 6.500 6 1 11.500" /></svg>;
const TreeArrow = ({ open }) => <svg width="8" height="9" viewBox="0 0 8 9"><path d={open ? "M7 1.500v6H1z" : "M2 0l4.500 4.200L2 8.500z"} fill="#a5a5a5" /></svg>;
const CalcBody = () => <><rect width="9" height="12" fill="#a8a8a8" /><path d="M1.500 2h6v1.500h-6z" fill="#fff" />{[5.500, 7.500, 9.500].map((y) => <path key={y} d={`M1.500 ${y}h1.200M4 ${y}h1.200M6.300 ${y}h1.200`} stroke="#fff" />)}</>;
const Calc = () => <svg width="9" height="12" viewBox="0 0 9 12"><CalcBody /></svg>;
const CalcTable = () => <svg width="13" height="14" viewBox="0 0 13 14"><path d="M1.500 12V.5H10" stroke="#a8a8a8" fill="none" /><g transform="translate(3 2)"><CalcBody /></g></svg>;
const TableGlyph = () => <svg width="13" height="12" viewBox="0 0 13 12"><rect width="13" height="12" fill="#a8a8a8" />{[4, 6.700, 9.400].map((y) => <path key={y} d={`M1 ${y + 0.7}h3M5 ${y + 0.7}h3M9 ${y + 0.7}h3`} stroke="#fff" strokeWidth="1.700" />)}</svg>;
const GLYPHS = {
  calc: <Calc />,
  key: <svg width="14" height="9" viewBox="0 0 14 9"><path d="M0 0h4v9H0z" fill="#999" /><rect x="4" width="10" height="9" fill="#fff" stroke="#ccc" /><path d="M6.500 3.500h5.500M6.500 6h5.500" stroke="#444" /></svg>,
  tree: <svg width="12" height="12" viewBox="0 0 12 12"><path d="M3 3v8h4M3 6h4" stroke="#222" strokeDasharray="1.500 1" fill="none" /><path d="M.5 0H5v2.500H.5zM7 4h4.500v3H7zM7 9h4.500v2.500H7z" fill="#e8c31a" /></svg>,
};

const FIELDS = [
  { name: "Product (Measures)", open: true, calc: true, items: [["List Price", "calc"], ["Standard Cost", "calc"]] },
  { name: "Sales Person (Meas...", open: true, calc: true, items: [["Bonus", "calc"], ["Sales Last Year", "calc"], ["Sales Person C...", "calc"], ["Sales YTD", "calc"]] },
  { name: "Transaction History...", calc: true },
  { name: "Product" },
  { name: "Purchase Order Det..." },
  { name: "Sales Person", open: true, items: [["Business Entity...", "key"], ["Country Regio..."], ["Group"], ["Hierarchy", "tree"], ["Country Regi...", null, true], ["Group", null, true], ["Name", null, true], ["Name"]] },
  { name: "Transaction History" },
];
const BONUS = [["AU", "5.650,00"], ["CA", "5.500,00"], ["DE", "75,00"], ["FR", "985,00"], ["GB", "5.150,00"], ["US", "31.250,00"]];

function Big({ w, off, icon, dx, a, b, caret }) {
  return <BigButton $w={w} $off={off} $dx={dx}>{icon}<span>{a}</span>{b && <span>{b}{caret && <Caret $off={off} />}</span>}</BigButton>;
}

export default function App() {
  return (
    <Window>
      <Global />
      <TitleBar>
        <QuickAccess>
          <svg width="160" height="22" viewBox="0 0 160 22" fill="none">
            <rect y="3" width="16" height="16" fill="#f2c811" /><path d="M4 12v4M7 10.500V16M10 9v6.500M13 7v9" stroke="#222" strokeWidth="2" />
            <path d="M23.500 5v12M147.500 5v12" stroke="#8492a0" /><path d="M24.500 5v12M148.500 5v12" stroke="#eef3f7" />
            <path d="M34 5h14v14H34z" fill="#8c5bb5" /><path d="M37 5.500h8.500V11H37zM37 14.500h8v4.500h-5.500v-2.500H38V19h-1z" fill="#fff" />
            <path d="M62 6l-5 4 5 4M57.500 10h7c5 0 5 8 0 8h-1" stroke={BLUE} strokeWidth="2.200" />
            <path d="M86 6l5 4-5 4M90.500 10h-7c-5 0-5 8 0 8h1" stroke="#9db1cd" strokeWidth="2.200" />
            <circle cx="107" cy="12" r="8" fill="#f8c51c" /><circle cx="104.200" cy="9.500" r="1.200" fill="#444" /><circle cx="109.800" cy="9.500" r="1.200" fill="#444" /><path d="M102.500 13c1 4.500 8 4.500 9 0" stroke="#444" strokeWidth="1.300" />
            <path d="M117 10.500h5l-2.500 3z" fill="#666" /><path d="M130 10.500h7" stroke="#222" strokeWidth="1.300" /><path d="M130.500 13h6l-3 3.200z" fill="#222" />
          </svg>
        </QuickAccess>
        <WindowTitle>TWDW2_Transaction_History - Power BI Desktop</WindowTitle>
        <WindowButtons>
          <svg width="97" height="22" viewBox="1503 0 97 22" fill="none">
            <rect x="1508" y="11" width="8" height="2" fill="#222" />
            <path d="M1533.500 7.500h7v6h-7zM1533 7h8M1535 4.500h7.500V12" stroke="#222" /><path d="M1533 7h8" stroke="#222" strokeWidth="2" />
            <rect x="1552" width="45" height="19" fill="#c75050" /><path d="M1571.500 6.500l6 6M1577.500 6.500l-6 6" stroke="#fff" strokeWidth="1.800" />
          </svg>
        </WindowButtons>
      </TitleBar>
      <TabRow>
        <Tab $w={56} $kind="file">File</Tab>
        <Tab $w={76} $kind="active">Home</Tab>
        <Tab $w={53}>View</Tab>
        <Tab $w={82}>Modeling</Tab>
        <TabTail>
          Sign in
          <svg width="36" height="16" viewBox="0 0 36 16" fill="none"><path d="M3 10l4-4.500L11 10" stroke="#999" strokeWidth="2.200" /><circle cx="28.500" cy="7.500" r="7" fill="#1979ca" /><path d="M26 6c0-3.500 5-3.500 5-.5 0 2-2.500 2-2.500 4M28.500 10.700v1.800" stroke="#fff" strokeWidth="1.700" /></svg>
        </TabTail>
      </TabRow>
      <Ribbon>
        <Group $w={156}>
          <GroupBody>
            <Big w={53} off icon={I.paste} dx={1} a="Paste" />
            <SmallStack>
              <SmallButton $off>{I.cut}Cut</SmallButton>
              <SmallButton $off>{I.copy}Copy</SmallButton>
              <SmallButton $off>{I.painter}Format Painter</SmallButton>
            </SmallStack>
          </GroupBody>
          <GroupName>Clipboard</GroupName>
        </Group>
        <Group $w={260}>
          <GroupBody>
            <Big w={48} off icon={I.getData} dx={3.5} a="Get" b="Data" caret />
            <Big w={47} off icon={I.recent} dx={3} a="Recent" b="Sources" caret />
            <Big w={50} off icon={I.enter} a="Enter" b="Data" />
            <ShortRule />
            <Big w={57} icon={I.edit} a="Edit" b="Queries" caret />
            <ShortRule $gap={2} />
            <Big w={49} icon={I.refresh} dx={1} a="Refresh" />
          </GroupBody>
          <GroupName>External data</GroupName>
        </Group>
        <Group $w={123}>
          <GroupBody $pad={2}>
            <Big w={58} icon={I.puzzle} a="Solution" b="Templates" />
            <Big w={55} icon={I.partner} a="Partner" b="Showcase" />
          </GroupBody>
          <GroupName>Resources</GroupName>
        </Group>
        <Group $w={167}>
          <GroupBody $pad={2}>
            <Big w={45} icon={I.newPage} dx={-1} a="New" b="Page" caret />
            <Big w={39} icon={I.newVisual} dx={-1.5} a="New" b="Visual" />
            <SmallStack $pad={4.5}>
              <SmallButton>{I.textbox}Text box</SmallButton>
              <SmallButton>{I.image}Image</SmallButton>
              <SmallButton>{I.shapes}Shapes<Caret /></SmallButton>
            </SmallStack>
          </GroupBody>
          <GroupName>Insert</GroupName>
        </Group>
        <Group $w={95}>
          <GroupBody $pad={3}>
            <Big w={42} icon={I.store} a="From" b="Store" />
            <Big w={42} icon={I.file} a="From" b="File" />
          </GroupBody>
          <GroupName>Custom visuals</GroupName>
        </Group>
        <Group $w={86}>
          <GroupBody><Big w={82} off icon={I.manage} a="Manage" b="Relationships" /></GroupBody>
          <GroupName>Relationships</GroupName>
        </Group>
        <Group $w={74}>
          <GroupBody><Big w={70} off icon={I.measure} a="New" b="Measure" caret /></GroupBody>
          <GroupName>Calculations</GroupName>
        </Group>
        <Group $w={54}>
          <GroupBody><Big w={50} icon={I.publish} a="Publish" /></GroupBody>
          <GroupName>Share</GroupName>
        </Group>
      </Ribbon>
      <Workspace>
        <Rail>
          <RailItem>
            <svg width="19" height="18" viewBox="0 0 19 18" fill="none"><rect x=".5" y=".5" width="18" height="17" stroke="#fff" /><path d="M4.500 7v10M9.500 11v6M14.500 5v12" stroke="#fff" strokeWidth="3" /></svg>
          </RailItem>
        </Rail>
        <Center>
          <Stage>
            <Report>
              <Heading $size={25} $narrow={0.925} $left={270}>Sales Last Year By Country and Geografical representation</Heading>
              <Row $h={338}>
                <Visual $w={291} $top={43}>
                  <VisualTitle $narrow={0.923} $left={15}>Sales Last Year by Group</VisualTitle>
                  <GroupChart />
                </Visual>
                <Visual $w={484} $top={3}>
                  <VisualTitle $narrow={0.923} $left={1}>Sales Last Year by Country Name</VisualTitle>
                  <MapSlot><WorldMap id="coast-sales" width={484} height={291} dx={0} dy={0} bubbles={SALES_BUBBLES} /></MapSlot>
                </Visual>
                <Visual $w={300} $top={163} $left={95}>
                  <Heading as="h2" $size={16} $narrow={0.935}>Bonus Per Country Region</Heading>
                  <Table>
                    <TableRow $head><span>Country Region Code</span><span>Bonus</span></TableRow>
                    {BONUS.map(([c, v], i) => <TableRow key={c} $stripe={i % 2 === 1} $last={i === 5}><span>{c}</span><span>{v}</span></TableRow>)}
                    <TableRow $total><span>Total</span><span>48.610,00</span></TableRow>
                  </Table>
                </Visual>
              </Row>
              <Row $h={264}>
                <Visual $w={619} $top={0}>
                  <Heading as="h2" $size={25} $narrow={0.921} $left={9.5}>Sales Year to Date vs Last Year for each Country.</Heading>
                  <Legend $top={29} $left={10}><LegendItem $c="#01b8aa" $w={60}>Sales YTD</LegendItem><LegendItem $c="#ff7a00">Sales Last Year</LegendItem></Legend>
                  <YearChart />
                </Visual>
                <Visual $w={520} $top={18}>
                  <VisualTitle $narrow={0.937} $left={0.5}>Bonus by Country Region Code and Country Region Code</VisualTitle>
                  <Legend $top={10}>
                    <LegendName>Country Region Code</LegendName>
                    <LegendItem $c="#374649" $w={31}>US</LegendItem><LegendItem $c="#fd625e" $w={32}>AU</LegendItem><LegendItem $c="#f2c80f" $w={31}>CA</LegendItem>
                    <LegendItem $c="#5f6b6d" $w={31}>GB</LegendItem><LegendItem $c="#8ad4eb" $w={30}>FR</LegendItem><LegendItem $c="#fe9666">DE</LegendItem>
                  </Legend>
                  <MapSlot><WorldMap id="coast-bonus" width={520} height={203} dx={33} dy={-58} bubbles={BONUS_BUBBLES} /></MapSlot>
                </Visual>
              </Row>
            </Report>
          </Stage>
          <PageBar>
            <Pager><svg width="34" height="35" viewBox="0 0 34 35"><path d="M10 14v8l-4-4zM23 14v8l4-4z" fill="#c0c0c0" /></svg></Pager>
            <PageTab>Page 1</PageTab><PageTab $on>Page 2</PageTab><PageTab $last>Page 3</PageTab>
            <AddPage><svg width="39" height="35" viewBox="0 0 39 35"><path d="M19.500 11.500v11M14 17h11" stroke="#6b6b6b" strokeWidth="3" /></svg></AddPage>
          </PageBar>
        </Center>
        <Pane>
          <PaneHead>Visualizations<Chevron /></PaneHead>
          <Gallery>{GALLERY.map((g, i) => <svg key={i} width="19" height="18" viewBox="0 0 19 18">{g}</svg>)}</Gallery>
          <ModeTabs>
            <ModeTab $on><svg width="20" height="20" viewBox="0 0 20 20" fill="none" stroke="#fff"><path d="M0 .5h16" /><path d="M.5 3.500h19v5H.5zM.5 10.500h19M.5 13.500h19v5H.5z" strokeDasharray="2 1.300" /></svg></ModeTab>
            <ModeTab><svg width="20" height="20" viewBox="-2 0 20 20" fill="none" stroke="#fff" strokeWidth="1.200"><rect x="-1" y=".6" width="14" height="4" rx="1" /><path d="M13 2.500h3.500v4.500L7 8.500V11M5 11h4v8.500H5z" /></svg></ModeTab>
          </ModeTabs>
          <WellLabel $top={7}>Values</WellLabel>
          <Well $m="5px 6px 4px 4px" $h={28} $pad={10}>Drag data fields here</Well>
          <SubHead>Filters</SubHead>
          <WellLabel $top={11}>Page level filters</WellLabel>
          <Well $m="9px 6px 0 4px" $h={24} $pad={8}>Drag data fields here</Well>
          <WellLabel $top={11}>Report level filters</WellLabel>
          <Well $m="9px 6px 0 4px" $h={24} $pad={8}>Drag data fields here</Well>
        </Pane>
        <Pane>
          <PaneHead>Fields<Chevron /></PaneHead>
          <SearchArea>
            <SearchBox><svg width="16" height="16" viewBox="0 0 16 16" fill="none" stroke="#bbb" strokeWidth="1.200"><circle cx="10" cy="5.500" r="4.800" /><path d="M6.500 9 .7 14.800" /></svg>Search</SearchBox>
          </SearchArea>
          <FieldTree>
            {FIELDS.map((t) => (
              <React.Fragment key={t.name}>
                <TableHead><TreeArrow open={t.open} /><GlyphPad>{t.calc ? <CalcTable /> : <TableGlyph />}</GlyphPad><FieldName>{t.name}</FieldName></TableHead>
                {t.items && (
                  <FieldList>
                    {t.items.map(([n, g, deep], i) => (
                      <Field key={n + i} $deep={deep} $joined={deep || g === "tree"}>
                        {!deep && <ArrowSlot>{g === "tree" && <TreeArrow open />}</ArrowSlot>}
                        <Box />
                        <GlyphSlot>{g && GLYPHS[g]}</GlyphSlot>
                        <FieldName>{n}</FieldName>
                      </Field>
                    ))}
                  </FieldList>
                )}
              </React.Fragment>
            ))}
          </FieldTree>
        </Pane>
      </Workspace>
      <StatusBar><span>PAGE 2 OF 3</span><span>Live connection: Connected</span></StatusBar>
      <TaskStrip><TaskButton $m={52} $w={58} /><TaskButton $m={128} $w={59} /><TaskButton $m={64} $w={59} /><TaskButton $m={4} $w={58} /><TaskButton $m={3} $w={60} /><TaskButton $m={2} $w={60} $on /></TaskStrip>
    </Window>
  );
}
